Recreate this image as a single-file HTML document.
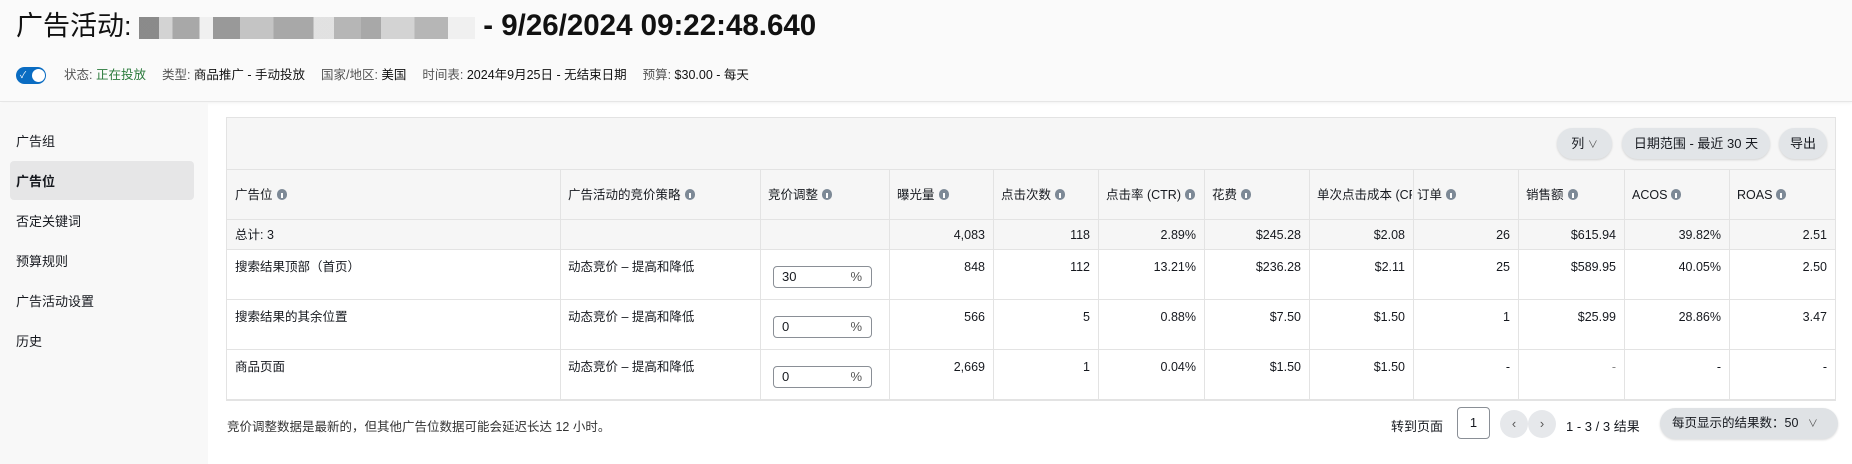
<!DOCTYPE html>
<html><head><meta charset="utf-8">
<style>
*{box-sizing:border-box;margin:0;padding:0}
body{width:1852px;height:464px;overflow:hidden;background:#fff;font-family:"Liberation Sans","Noto Sans CJK SC",sans-serif;color:#16191f;font-size:13px;position:relative}
.a{position:absolute;white-space:nowrap}
#hdr{position:absolute;left:0;top:0;width:1852px;height:102px;background:#fafafa;border-bottom:1px solid #e6e6e6;box-shadow:0 1px 3px rgba(0,0,0,.06)}
#side{position:absolute;left:0;top:103px;width:208px;height:361px;background:#f8f8f8}
.nav{position:absolute;left:16px;font-size:13px;color:#16191f}
.blur{display:inline-block;height:22px;vertical-align:middle;background:linear-gradient(90deg,#777 0 6%,#ccc 6% 10%,#999 10% 18%,#eee 18% 22%,#888 22% 30%,#bbb 30% 40%,#999 40% 52%,#ddd 52% 58%,#aaa 58% 66%,#999 66% 72%,#ccc 72% 82%,#aaa 82% 92%,#eee 92%);opacity:.85}
#card{position:absolute;left:226px;top:117px;width:1610px;height:284px;border:1px solid #e3e3e3;background:#f6f6f6}
.btn{position:absolute;top:128px;height:31px;border-radius:16px;background:#e2e5e8;font-size:13px;line-height:31px;text-align:center;color:#16191f;box-shadow:0 1px 2px rgba(0,0,0,.15)}
.i{display:inline-block;width:10px;height:11px;border-radius:5px;background:#7d8996;vertical-align:-1px;margin-left:4px;position:relative}
.i:after{content:"";position:absolute;left:4px;top:4px;width:2px;height:5px;background:#fff}
.cell{position:absolute;font-size:12.5px;line-height:16px;overflow:hidden;white-space:nowrap}
.vl{position:absolute;width:1px;background:#e3e3e3}
.hl{position:absolute;height:1px;background:#e3e3e3;left:227px;width:1608px}
.inp{position:absolute;left:773px;width:99px;height:22px;border:1px solid #8a8f96;border-radius:4px;background:#fff;font-size:13px;line-height:20px;padding-left:8px}
.inp span{position:absolute;right:9px;color:#555}
#nums{position:absolute;left:0;top:0;width:1852px;height:464px}
</style></head><body>
<div id="hdr"></div>
<div class="a" style="left:16px;top:8px;font-size:27px;line-height:36px;color:#111">广告活动: <span class="blur" style="width:336px"></span><b style="font-size:29.5px"> - 9/26/2024 09:22:48.640</b></div>
<div class="a" style="left:16px;top:67px;width:30px;height:17px;border-radius:9px;background:#0a6cc2"></div>
<div class="a" style="left:32px;top:69px;width:13px;height:13px;border-radius:7px;background:#fff"></div>
<div class="a" style="left:20px;top:70px;font-size:9px;color:#fff;line-height:11px">✓</div>
<div class="a" style="left:64px;top:66px;font-size:12.5px;line-height:18px;color:#555">状态: <span style="color:#2a7a3b">正在投放</span>　 类型: <span style="color:#111">商品推广 - 手动投放</span>　 国家/地区: <span style="color:#111">美国</span>　 时间表: <span style="color:#111">2024年9月25日 - 无结束日期</span>　 预算: <span style="color:#111">$30.00 - 每天</span></div>
<div id="side"></div>
<div class="a" style="left:10px;top:161px;width:184px;height:39px;border-radius:4px;background:#e6e6e7"></div>
<div class="nav" style="top:131px">广告组</div>
<div class="nav" style="top:171px;font-weight:bold">广告位</div>
<div class="nav" style="top:211px">否定关键词</div>
<div class="nav" style="top:251px">预算规则</div>
<div class="nav" style="top:291px">广告活动设置</div>
<div class="nav" style="top:331px">历史</div>

<div id="card"></div>
<div class="btn" style="left:1557px;width:55px">列 <span style="font-size:10px;color:#555">&#8744;</span></div>
<div class="btn" style="left:1622px;width:148px">日期范围 - 最近 30 天</div>
<div class="btn" style="left:1779px;width:48px">导出</div>

<div class="a" style="left:227px;top:219px;width:1608px;height:30px;background:#f6f6f6"></div>
<div class="a" style="left:227px;top:249px;width:1608px;height:150px;background:#fff"></div>
<div class="hl" style="top:169px"></div>
<div class="hl" style="top:219px"></div>
<div class="hl" style="top:249px"></div>
<div class="hl" style="top:299px"></div>
<div class="hl" style="top:349px"></div>
<div class="hl" style="top:399px;height:2px"></div>
<div class="vl" style="left:560px;top:169px;height:230px"></div>
<div class="vl" style="left:760px;top:169px;height:230px"></div>
<div class="vl" style="left:889px;top:169px;height:230px"></div>
<div class="vl" style="left:993px;top:169px;height:230px"></div>
<div class="vl" style="left:1098px;top:169px;height:230px"></div>
<div class="vl" style="left:1204px;top:169px;height:230px"></div>
<div class="vl" style="left:1309px;top:169px;height:230px"></div>
<div class="vl" style="left:1413px;top:169px;height:230px"></div>
<div class="vl" style="left:1518px;top:169px;height:230px"></div>
<div class="vl" style="left:1624px;top:169px;height:230px"></div>
<div class="vl" style="left:1729px;top:169px;height:230px"></div>

<div class="cell" style="left:235px;top:187px">广告位<i class="i"></i></div>
<div class="cell" style="left:568px;top:187px">广告活动的竞价策略<i class="i"></i></div>
<div class="cell" style="left:768px;top:187px">竞价调整<i class="i"></i></div>
<div class="cell" style="left:897px;top:187px">曝光量<i class="i"></i></div>
<div class="cell" style="left:1001px;top:187px">点击次数<i class="i"></i></div>
<div class="cell" style="left:1106px;top:187px">点击率 (CTR)<i class="i"></i></div>
<div class="cell" style="left:1212px;top:187px">花费<i class="i"></i></div>
<div class="cell" style="left:1317px;top:187px;width:95px">单次点击成本 (CPC)</div>
<div class="cell" style="left:1417px;top:187px">订单<i class="i"></i></div>
<div class="cell" style="left:1526px;top:187px">销售额<i class="i"></i></div>
<div class="cell" style="left:1632px;top:187px">ACOS<i class="i"></i></div>
<div class="cell" style="left:1737px;top:187px">ROAS<i class="i"></i></div>

<div class="cell" style="left:235px;top:227px">总计: 3</div>
<div class="cell" style="left:235px;top:259px">搜索结果顶部（首页）</div>
<div class="cell" style="left:235px;top:309px">搜索结果的其余位置</div>
<div class="cell" style="left:235px;top:359px">商品页面</div>
<div class="cell" style="left:568px;top:259px">动态竞价 – 提高和降低</div>
<div class="cell" style="left:568px;top:309px">动态竞价 – 提高和降低</div>
<div class="cell" style="left:568px;top:359px">动态竞价 – 提高和降低</div>
<div class="inp" style="top:266px">30<span>%</span></div>
<div class="inp" style="top:316px">0<span>%</span></div>
<div class="inp" style="top:366px">0<span>%</span></div>

<div id="nums">
<div class="cell" style="right:867px;top:227px">4,083</div>
<div class="cell" style="right:762px;top:227px">118</div>
<div class="cell" style="right:656px;top:227px">2.89%</div>
<div class="cell" style="right:551px;top:227px">$245.28</div>
<div class="cell" style="right:447px;top:227px">$2.08</div>
<div class="cell" style="right:342px;top:227px">26</div>
<div class="cell" style="right:236px;top:227px">$615.94</div>
<div class="cell" style="right:131px;top:227px">39.82%</div>
<div class="cell" style="right:25px;top:227px">2.51</div>

<div class="cell" style="right:867px;top:259px">848</div>
<div class="cell" style="right:762px;top:259px">112</div>
<div class="cell" style="right:656px;top:259px">13.21%</div>
<div class="cell" style="right:551px;top:259px">$236.28</div>
<div class="cell" style="right:447px;top:259px">$2.11</div>
<div class="cell" style="right:342px;top:259px">25</div>
<div class="cell" style="right:236px;top:259px">$589.95</div>
<div class="cell" style="right:131px;top:259px">40.05%</div>
<div class="cell" style="right:25px;top:259px">2.50</div>

<div class="cell" style="right:867px;top:309px">566</div>
<div class="cell" style="right:762px;top:309px">5</div>
<div class="cell" style="right:656px;top:309px">0.88%</div>
<div class="cell" style="right:551px;top:309px">$7.50</div>
<div class="cell" style="right:447px;top:309px">$1.50</div>
<div class="cell" style="right:342px;top:309px">1</div>
<div class="cell" style="right:236px;top:309px">$25.99</div>
<div class="cell" style="right:131px;top:309px">28.86%</div>
<div class="cell" style="right:25px;top:309px">3.47</div>

<div class="cell" style="right:867px;top:359px">2,669</div>
<div class="cell" style="right:762px;top:359px">1</div>
<div class="cell" style="right:656px;top:359px">0.04%</div>
<div class="cell" style="right:551px;top:359px">$1.50</div>
<div class="cell" style="right:447px;top:359px">$1.50</div>
<div class="cell" style="right:342px;top:359px">-</div>
<div class="cell" style="right:236px;top:359px;color:#888">-</div>
<div class="cell" style="right:131px;top:359px">-</div>
<div class="cell" style="right:25px;top:359px">-</div>
</div>

<div class="a" style="left:227px;top:416px;font-size:12.5px;color:#333">竞价调整数据是最新的，但其他广告位数据可能会延迟长达 12 小时。</div>
<div class="a" style="left:1391px;top:416px;font-size:13px">转到页面</div>
<div class="a" style="left:1457px;top:407px;width:33px;height:32px;border:1px solid #8a8f96;border-radius:4px;background:#fff;text-align:center;line-height:30px;font-size:13px">1</div>
<div class="a" style="left:1500px;top:410px;width:28px;height:28px;border-radius:14px;background:#e6e8eb;text-align:center;line-height:28px;font-size:13px;color:#555">&#8249;</div>
<div class="a" style="left:1528px;top:410px;width:28px;height:28px;border-radius:14px;background:#e6e8eb;text-align:center;line-height:28px;font-size:13px;color:#555">&#8250;</div>
<div class="a" style="left:1566px;top:416px;font-size:13px">1 - 3 / 3 结果</div>
<div class="a" style="left:1660px;top:408px;width:178px;height:31px;border-radius:16px;background:#dfe2e5;box-shadow:0 1px 2px rgba(0,0,0,.15);line-height:31px;font-size:12.5px;padding-left:12px">每页显示的结果数：50 <span style="font-size:10px;color:#555;margin-left:6px">&#8744;</span></div>
</body></html>
